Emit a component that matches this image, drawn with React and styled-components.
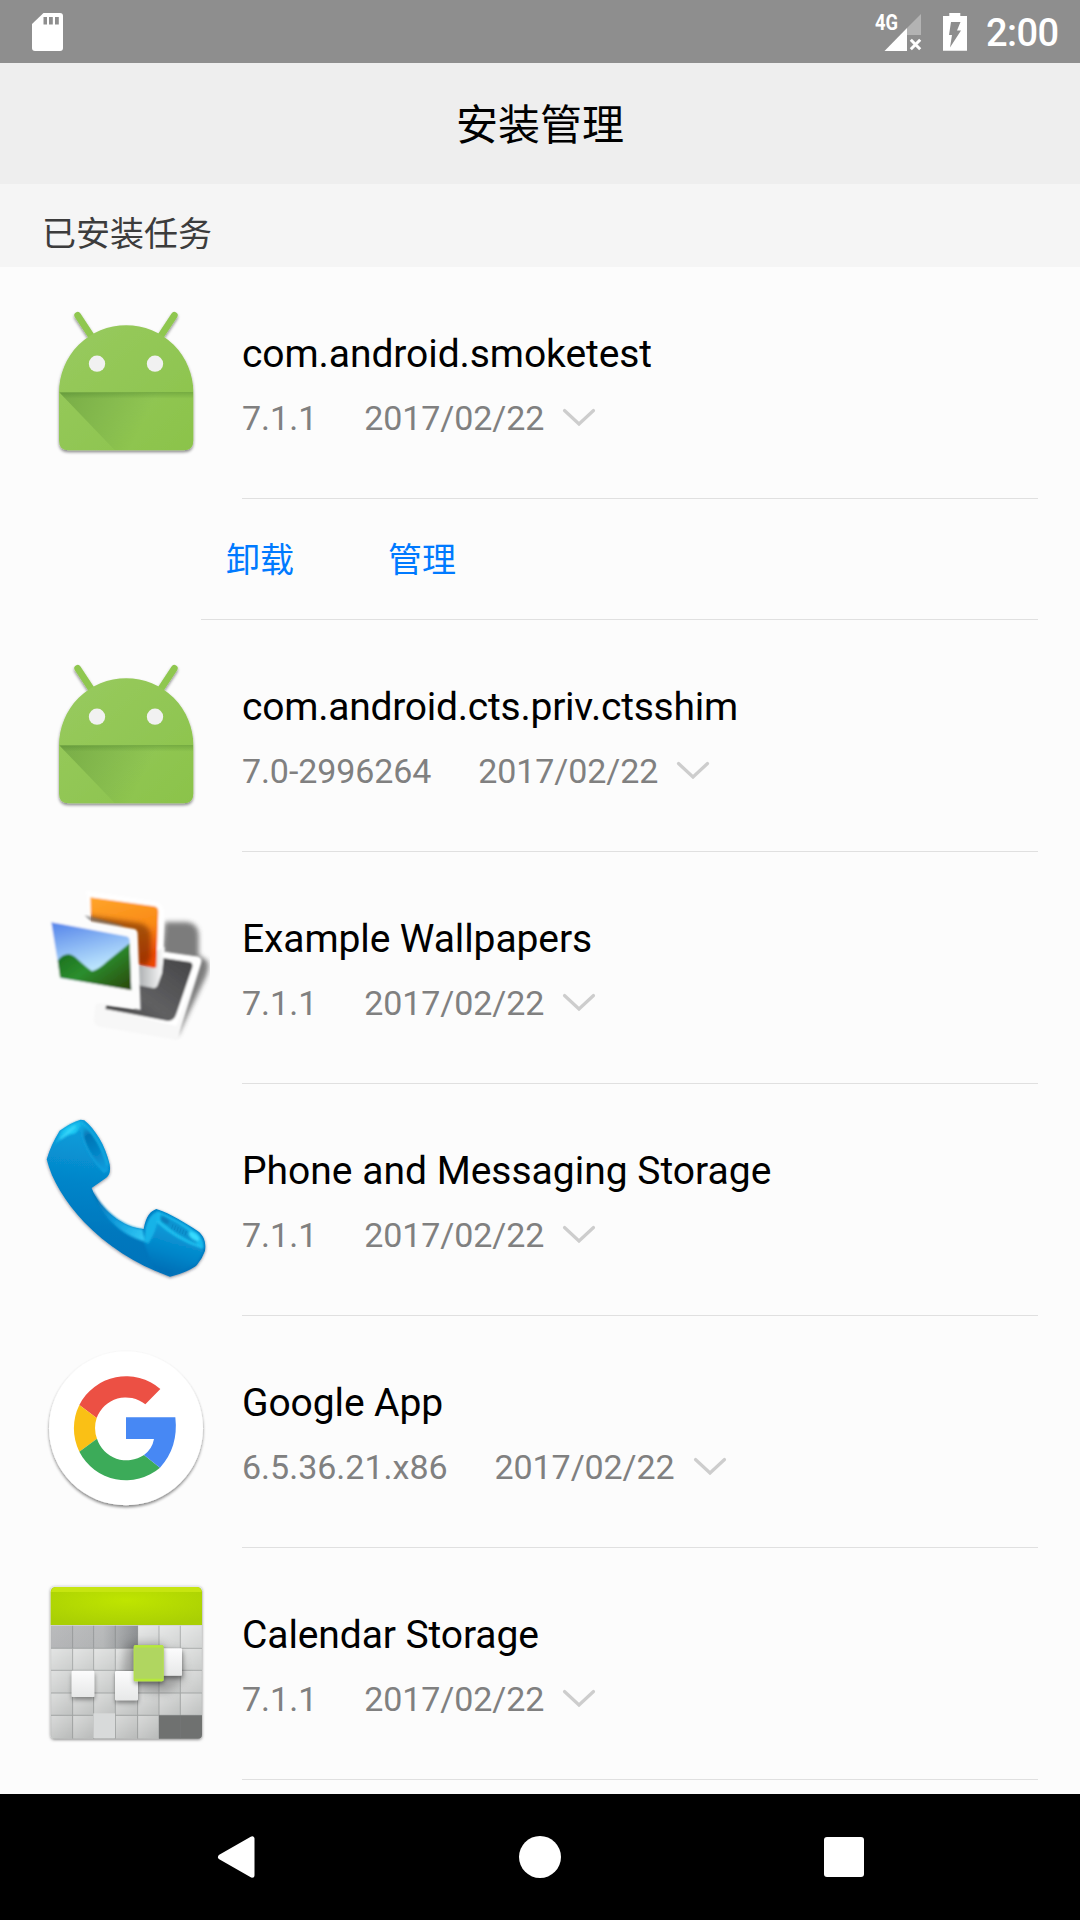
import React from "react";
import styled, { createGlobalStyle } from "styled-components";

const GlobalStyle = createGlobalStyle`
  body {
    margin: 0;
    background: #fcfcfc;
    font-family: Roboto, "Noto Sans CJK SC", sans-serif;
  }
`;

const Screen = styled.div`
  width: 1080px;
  height: 1920px;
  display: flex;
  flex-direction: column;
  overflow: hidden;
  background: #fcfcfc;
`;

const StatusBar = styled.div`
  height: 63px;
  flex: none;
  display: flex;
  align-items: center;
  justify-content: space-between;
  padding: 0 20px 0 31px;
  background: #8e8e8e;
  color: #fff;
`;

const StatusGroup = styled.div`
  display: flex;
  align-items: center;
`;

const Clock = styled.span`
  width: 74px;
  margin-left: 18px;
  font-size: 38px;
  line-height: 44px;
  font-weight: 500;
  letter-spacing: -0.6px;
  padding-top: 3px;
  white-space: nowrap;
`;

const StatusSvg = styled.svg`
  display: block;
  margin-left: ${(p) => p.$gap || 0}px;
`;

const Header = styled.header`
  height: 121px;
  flex: none;
  box-sizing: border-box;
  padding-top: 4px;
  display: flex;
  align-items: center;
  justify-content: center;
  background: #eeeeee;
`;

const Title = styled.h1`
  margin: 0;
  font-size: 42px;
  line-height: 60px;
  font-weight: 400;
  color: #000;
`;

const SectionHeader = styled.div`
  height: 83px;
  flex: none;
  box-sizing: border-box;
  padding: 25px 42px 0;
  background: #f5f5f5;
  color: #3c3c3c;
  font-size: 34px;
  line-height: 50px;
`;

const List = styled.main`
  flex: 1;
  min-height: 0;
  overflow: hidden;
`;

const Row = styled.div`
  height: 232px;
  display: flex;
  padding-right: 42px;
`;

const IconBox = styled.div`
  width: 160px;
  height: 160px;
  margin: 36px 36px 0 46px;
  flex: none;
`;

const AppSvg = styled.svg`
  display: block;
  overflow: visible;
`;

const Details = styled.div`
  flex: 1;
  box-sizing: border-box;
  padding-top: 64px;
  border-bottom: 1px solid #e0e0e0;
`;

const AppName = styled.div`
  font-size: 39px;
  line-height: 47px;
  letter-spacing: ${(p) => p.$tracking || 0}px;
  color: #000;
  white-space: nowrap;
`;

const Meta = styled.div`
  display: flex;
  align-items: center;
  margin-top: 20px;
  font-size: 34px;
  line-height: 40px;
  letter-spacing: -0.1px;
  color: #808080;
`;

const Version = styled.span`
  letter-spacing: ${(p) => p.$tracking || 0}px;
`;

const InstallDate = styled.span`
  margin: 0 18px 0 47px;
`;

const Actions = styled.div`
  height: 121px;
  box-sizing: border-box;
  margin: 0 42px 0 201px;
  padding: 2px 0 0 25px;
  display: flex;
  align-items: center;
  gap: 94px;
  border-bottom: 1px solid #e0e0e0;
`;

const ActionButton = styled.button`
  border: 0;
  padding: 0;
  background: none;
  font: inherit;
  font-size: 34px;
  line-height: 50px;
  color: #007aff;
`;

const NavBar = styled.nav`
  height: 126px;
  flex: none;
  display: flex;
  align-items: center;
  justify-content: space-between;
  padding: 0 216px;
  background: #000;
`;

const NavButton = styled.button`
  display: flex;
  border: 0;
  padding: 0;
  background: none;
`;

function SdCard() {
  return (
    <StatusSvg width="32" height="40" viewBox="0 0 32 40">
      <path fill="#fff" d="M12.500 1H29q3 0 3 3v32q0 3-3 3H4q-3 0-3-3V12z" />
      <path fill="#8e8e8e" d="M12.500 5h3.500v7.500h-3.500zM18 5h3.800v7.500H18zM24 5h3.800v7.500H24z" />
    </StatusSvg>
  );
}

const SignalLabel = styled.text`
  font-family: Roboto, sans-serif;
  font-weight: 700;
  font-size: 22px;
  fill: #fff;
`;

function Signal() {
  return (
    <StatusSvg width="52" height="56" viewBox="-4 -8 52 56">
      <SignalLabel x="1" y="17.600" textLength="23" lengthAdjust="spacingAndGlyphs">4G</SignalLabel>
      <path fill="#b3b3b3" d="M47 2v21H33v-7z" />
      <path fill="#fff" d="M33 16v23H10.500z" />
      <path stroke="#fff" strokeWidth="3" d="m36.800 27.800 9.400 9.400m0-9.400-9.400 9.400" />
    </StatusSvg>
  );
}

function Battery() {
  return (
    <StatusSvg $gap={20} width="26" height="40" viewBox="0 0 26 40">
      <path fill="#fff" d="M7.300 1h11v3H25v34.700H1V4h6.300z" />
      <path fill="#8e8e8e" d="M9 10h9.500l-3.500 8.500h4L8 35.500l2-12.500H7z" />
    </StatusSvg>
  );
}

function Chevron() {
  return (
    <svg width="34" height="20" viewBox="0 0 34 20">
      <path d="M2.500 2.500 17 16 31.500 2.500" fill="none" stroke="#cdcdcd" strokeWidth="3.200" strokeLinecap="round" />
    </svg>
  );
}

function AndroidIcon({ id }) {
  return (
    <AppSvg width="160" height="160" viewBox="48 39 480 480">
      <defs>
        <linearGradient id={`${id}-body`} x1="0" y1="0" x2="1" y2="1">
          <stop offset="0" stopColor="#98ca5f" />
          <stop offset="1" stopColor="#8bc34a" />
        </linearGradient>
        <linearGradient id={`${id}-fold`} gradientUnits="userSpaceOnUse" x1="100" y1="310" x2="330" y2="420">
          <stop offset="0" stopColor="#33691e" stopOpacity=".28" />
          <stop offset="1" stopColor="#33691e" stopOpacity="0" />
        </linearGradient>
        <linearGradient id={`${id}-seam`} x1="0" y1="0" x2="0" y2="1">
          <stop offset="0" stopColor="#33691e" stopOpacity=".28" />
          <stop offset="1" stopColor="#33691e" stopOpacity="0" />
        </linearGradient>
        <filter id={`${id}-shadow`} x="-10%" y="-10%" width="120%" height="125%">
          <feDropShadow dx="0" dy="6" stdDeviation="5" floodColor="#000" floodOpacity=".45" />
        </filter>
      </defs>
      <g filter={`url(#${id}-shadow)`}>
        <path d="m143 76 42 64M433 76l-42 64" stroke="#8fc750" strokeWidth="20" strokeLinecap="round" />
        <path fill={`url(#${id}-body)`} d="M87 307a201 201 0 0 1 403 0v145q0 29-29 29H116q-29 0-29-29z" />
      </g>
      <path fill={`url(#${id}-fold)`} d="M89 308h400v144q0 28-28 28H254z" />
      <path fill={`url(#${id}-seam)`} d="M88 306h401v20H105z" />
      <circle cx="201" cy="221" r="24.500" fill="#f1f1f1" />
      <circle cx="375" cy="221" r="24.500" fill="#f1f1f1" />
    </AppSvg>
  );
}

function WallpapersIcon() {
  return (
    <AppSvg width="160" height="160" viewBox="48 24 480 480">
      <defs>
        <linearGradient id="wp-sky" x1="0.200" y1="0" x2="0.500" y2="1">
          <stop offset="0" stopColor="#5b8aeb" />
          <stop offset=".7" stopColor="#b9e3fd" />
        </linearGradient>
        <linearGradient id="wp-hill" x1="0" y1="0.100" x2="1" y2="1">
          <stop offset="0" stopColor="#176b1b" />
          <stop offset=".45" stopColor="#2c8e2e" />
          <stop offset="1" stopColor="#2c4508" />
        </linearGradient>
        <linearGradient id="wp-orange" x1="0" y1="0" x2="0.300" y2="1">
          <stop offset="0" stopColor="#ffa52a" />
          <stop offset=".6" stopColor="#f98a16" />
          <stop offset="1" stopColor="#ee4a03" />
        </linearGradient>
        <linearGradient id="wp-grey" x1="1" y1="0" x2="0" y2="1">
          <stop offset="0" stopColor="#454547" />
          <stop offset=".6" stopColor="#606062" />
          <stop offset="1" stopColor="#444" />
        </linearGradient>
        <linearGradient id="wp-edge" x1="0" y1="0" x2="1" y2="0">
          <stop offset="0" stopColor="#a9acae" />
          <stop offset="1" stopColor="#fff" />
        </linearGradient>
        <filter id="wp-blur" x="-30%" y="-30%" width="160%" height="160%">
          <feGaussianBlur stdDeviation="8" />
        </filter>
        <filter id="wp-soft" x="-5%" y="-5%" width="110%" height="110%">
          <feGaussianBlur stdDeviation="3.500" />
        </filter>
        <clipPath id="wp-clip"><path d="M30 20h510v490H30z" /></clipPath>
        <clipPath id="wp-orange-clip"><path d="m181 52 192 27q12 3 12 16l-6 166q-5 4-12 2l-130-29-54-108z" /></clipPath>
      </defs>
      <g clipPath="url(#wp-clip)">
        <path filter="url(#wp-blur)" fill="#6e6e6e" opacity=".9" d="M405 126h65q34 4 36 38v62l26 16q8 20-5 50l-85 178-26-230-20-30z" />
        <g filter="url(#wp-soft)">
          <path fill="#f7f7f7" d="m408 218 94 12q16 6 10 24l-70 226-232-40q-22-4-18-26l4-38z" />
          <path fill="#fff" d="m408 216 98 14q10 4 8 14l-74 194-214-50 110-150z" />
          <path fill="url(#wp-grey)" d="m400 234 80 12q10 4 7 16l-48 140q-7 22-26 21l-187-36 3-12 84 10v-75l60 10z" />
          <path fill="#fff" d="m168 32 206 32q24 6 28 28l-2 118q-4 36-14 50l-54-5-148-115z" />
          <path fill="url(#wp-edge)" d="m322 245 82-45-8 80-14 38q-4 8-14 6l-46-9z" />
          <path fill="url(#wp-orange)" d="m181 52 192 27q12 3 12 16l-6 166q-5 4-12 2l-130-29-54-108z" />
        </g>
        <g clipPath="url(#wp-orange-clip)">
          <path filter="url(#wp-blur)" fill="#6e2a00" opacity=".6" d="m168 106 160 24q32 7 34 36v66l-12 26-110-20z" />
        </g>
        <path filter="url(#wp-soft)" fill="#777" opacity=".65" d="m164 106 30 7 90 25-28 5-70-13z" />
        <g filter="url(#wp-soft)">
          <path fill="#fcfcfc" d="m48 100 264 47q10 2 11 14l9 229-225-38q-25-7-29-32z" />
          <path fill="url(#wp-sky)" d="m64 127 224 42q10 2 11 12l5 148-213-34z" />
          <path fill="url(#wp-hill)" d="M83 242q28-36 60-4 25 23 43 36 24-9 44-29l69-55 5 141-214-38z" />
        </g>
      </g>
    </AppSvg>
  );
}

function PhoneIcon() {
  return (
    <AppSvg width="160" height="160" viewBox="48 60 480 480">
      <defs>
        <linearGradient id="ph-body" gradientUnits="userSpaceOnUse" x1="150" y1="110" x2="90" y2="560">
          <stop offset="0" stopColor="#0a9ad8" />
          <stop offset=".3" stopColor="#0485c9" />
          <stop offset=".6" stopColor="#0278be" />
          <stop offset="1" stopColor="#0670b8" />
        </linearGradient>
        <linearGradient id="ph-block" gradientUnits="userSpaceOnUse" x1="440" y1="395" x2="400" y2="530">
          <stop offset="0" stopColor="#0a98d7" />
          <stop offset=".5" stopColor="#0484c8" />
          <stop offset="1" stopColor="#0669b1" />
        </linearGradient>
        <linearGradient id="ph-top" x1="0" y1="1" x2="1" y2="0">
          <stop offset="0" stopColor="#0aa0dd" />
          <stop offset=".6" stopColor="#1fcdf5" />
          <stop offset="1" stopColor="#10b4e8" />
        </linearGradient>
        <linearGradient id="ph-ear" gradientUnits="userSpaceOnUse" x1="155" y1="70" x2="232" y2="210">
          <stop offset="0" stopColor="#14bdee" />
          <stop offset=".25" stopColor="#0674b4" />
          <stop offset=".6" stopColor="#0684c6" />
          <stop offset="1" stopColor="#0b9fdf" />
        </linearGradient>
        <linearGradient id="ph-inner" gradientUnits="userSpaceOnUse" x1="190" y1="270" x2="350" y2="420">
          <stop offset="0" stopColor="#0567a8" />
          <stop offset=".45" stopColor="#0d98d8" />
          <stop offset="1" stopColor="#35cdf8" />
        </linearGradient>
        <filter id="ph-shadow" x="-8%" y="-8%" width="116%" height="118%">
          <feDropShadow dx="0" dy="3" stdDeviation="4" floodColor="#223" floodOpacity=".5" />
        </filter>
        <filter id="ph-soft" x="-20%" y="-20%" width="140%" height="140%">
          <feGaussianBlur stdDeviation="3" />
        </filter>
      </defs>
      <path filter="url(#ph-shadow)" fill="url(#ph-body)" d="M152 59Q128 65 89 92 62 135 50 178c14 60 55 128 112 188 69 72 158 129 258 164 36-8 70-24 80-34q17-20 25-44c4-25-4-47-22-59-39-25-79-51-124-66-18 6-31 21-38 60-60-4-131-56-156-123l44-31q15-12 10-40c-13-58-44-106-76-132z" />
      <g filter="url(#ph-soft)">
        <path fill="url(#ph-top)" d="M150 63Q122 70 93 94L70 140q28-32 66-40 14-10 19-34z" />
        <path fill="none" stroke="#4fe0ff" strokeWidth="7" opacity=".6" d="m92 116 44-38" />
        <path fill="url(#ph-ear)" d="M154 64c38 30 69 85 81 132l-2 20-12 2c-30-32-58-76-68-122z" />
        <path fill="none" stroke="#14b4e8" strokeWidth="5" d="M155 66c36 32 64 82 78 130" />
        <path fill="none" stroke="#14a5e0" strokeWidth="5" d="M155 74c-3 50 32 106 68 142" />
        <path fill="url(#ph-inner)" d="M186 266c30 62 90 114 152 121l7 38c-75-21-137-80-159-159z" />
        <path fill="url(#ph-block)" d="M380 366l130 74 12 12-22 40-80 34-50-22-28-76q28-24 38-62z" />
        <path fill="#18b3e8" d="M346 384q9-38 34-50l3 28q-6 36-28 68l-12-4z" />
        <path fill="#19b9ec" d="M381 333c42 13 84 39 120 64 15 12 22 30 20 48-57-14-102-44-140-79z" />
        <path fill="#0b92cf" d="M392 344q55 24 90 54 18 20 18 34-62-26-102-66-10-12-6-22z" />
        <path fill="none" stroke="#25c6f3" strokeWidth="5" d="M381 364c36 34 88 62 138 80" />
        <ellipse cx="404" cy="361" rx="14" ry="9" transform="rotate(35 404 361)" fill="#0779b5" opacity=".8" />
        <ellipse cx="492" cy="409" rx="19" ry="9" transform="rotate(38 492 409)" fill="#37dcff" />
      </g>
      <path d="m429 373-4 13m12-9-4 13m12-9-4 13m12-9-4 13m12-9-4 13m12-9-4 13" stroke="#067bb5" strokeWidth="3" opacity=".45" />
    </AppSvg>
  );
}

function GoogleIcon() {
  return (
    <AppSvg width="160" height="160" viewBox="48 51 480 480">
      <defs>
        <filter id="go-shadow" x="-10%" y="-10%" width="120%" height="120%">
          <feDropShadow dx="0" dy="6" stdDeviation="5.500" floodColor="#000" floodOpacity=".48" />
        </filter>
      </defs>
      <circle cx="288" cy="280" r="231" fill="#fff" filter="url(#go-shadow)" />
      <path fill="#ec5044" d="M148 210A157 157 0 0 1 391 162l-45 46A93 93 0 0 0 200 249z" />
      <path fill="#fac015" d="M148 210a158 158 0 0 0 0 140l53-39a93 93 0 0 1-1-62z" />
      <path fill="#3cab59" d="M148 350a157 157 0 0 0 242 48l-48-38a93 93 0 0 1-141-49z" />
      <path fill="#4788f4" d="M288 247h148q10 90-46 151l-48-38q25-19 30-48h-84z" />
    </AppSvg>
  );
}

const CELL_X = [63, 128, 191, 256, 323, 387, 451, 516];
const CELL_Y = [167, 235, 301, 369, 436, 506];

function CalendarIcon() {
  return (
    <AppSvg width="160" height="160" viewBox="48 42 480 480">
      <defs>
        <radialGradient id="ca-top" cx=".5" cy=".35" r=".7">
          <stop offset="0" stopColor="#bfe500" />
          <stop offset="1" stopColor="#a9cf04" />
        </radialGradient>
        <linearGradient id="ca-grid" x1="0" y1="0" x2="0" y2="1">
          <stop offset="0" stopColor="#e0e2e2" />
          <stop offset=".5" stopColor="#cdcfce" />
          <stop offset="1" stopColor="#b9bbba" />
        </linearGradient>
        <linearGradient id="ca-past" x1="0" y1="0" x2="1" y2="0">
          <stop offset="0" stopColor="#b1b2b4" />
          <stop offset=".6" stopColor="#b2b4b5" />
          <stop offset="1" stopColor="#888b8e" />
        </linearGradient>
        <linearGradient id="ca-cell" x1="0" y1="0" x2="1" y2="1">
          <stop offset="0" stopColor="#fff" stopOpacity=".4" />
          <stop offset="1" stopColor="#fff" stopOpacity="0" />
        </linearGradient>
        <linearGradient id="ca-tile" x1="0" y1="0" x2="0" y2="1">
          <stop offset="0" stopColor="#fcfcfd" />
          <stop offset="1" stopColor="#e7e8e8" />
        </linearGradient>
        <filter id="ca-shadow" x="-10%" y="-10%" width="120%" height="120%">
          <feDropShadow dx="0" dy="2" stdDeviation="4" floodColor="#000" floodOpacity=".5" />
        </filter>
        <filter id="ca-drop" x="-40%" y="-40%" width="190%" height="190%">
          <feDropShadow dx="1" dy="8" stdDeviation="6" floodColor="#000" floodOpacity=".4" />
        </filter>
        <filter id="ca-blur" x="-40%" y="-40%" width="180%" height="180%">
          <feGaussianBlur stdDeviation="14" />
        </filter>
      </defs>
      <rect x="62" y="50" width="454" height="457" rx="12" fill="url(#ca-grid)" filter="url(#ca-shadow)" />
      <path fill="url(#ca-top)" d="M62 165V66q1-14 14-15h426q13 1 14 15v99z" />
      <path fill="#c6e510" d="M63 66q3-14 14-15h424q12 1 14 15z" />
      <path fill="url(#ca-past)" d="M63 167h260v68H63z" />
      <g fill="url(#ca-cell)">
        {CELL_Y.slice(0, -1).map((y, r) =>
          CELL_X.slice(0, -1).map((x, c) => (
            <rect key={`${r}-${c}`} x={x + 1} y={y + 1} width={CELL_X[c + 1] - x - 3} height={CELL_Y[r + 1] - y - 3} opacity={r === 0 && c < 4 ? 0.3 : 1} />
          ))
        )}
      </g>
      <path fill="#6f7170" d="M387 436h129v58q0 12-12 12H387z" />
      <g stroke="#777b7b" strokeWidth="3" opacity=".42">
        {CELL_X.slice(1, -1).map((x) => <path key={x} d={`M${x} 167v339`} />)}
        {CELL_Y.slice(1, -1).map((y) => <path key={y} d={`M63 ${y}h453`} />)}
      </g>
      <path filter="url(#ca-blur)" fill="#555" opacity=".4" d="M290 220h110v24h50l14 80-56 45-80-10-52-50z" />
      <rect x="190" y="430" width="65" height="74" fill="#d8dada" />
      <g fill="url(#ca-tile)" filter="url(#ca-drop)">
        <rect x="125" y="302" width="68" height="79" rx="3" />
        <rect x="255" y="303" width="69" height="88" rx="3" />
        <rect x="392" y="235" width="64" height="82" rx="3" />
      </g>
      <g filter="url(#ca-drop)">
        <rect x="311" y="225" width="90" height="109" rx="6" fill="#b0d660" />
      </g>
      <path d="M313 229h86M313 330h86" stroke="#b6e83b" strokeWidth="7" />
      <path d="M313 228v104M399 228v104" stroke="#b4df4e" strokeWidth="3" />
    </AppSvg>
  );
}

const APPS = [
  { name: "com.android.smoketest", tracking: -0.08, version: "7.1.1", icon: <AndroidIcon id="smoke" />, expanded: true },
  { name: "com.android.cts.priv.ctsshim", tracking: -0.24, version: "7.0-2996264", versionTracking: -0.1, icon: <AndroidIcon id="shim" /> },
  { name: "Example Wallpapers", tracking: -0.1, version: "7.1.1", icon: <WallpapersIcon /> },
  { name: "Phone and Messaging Storage", version: "7.1.1", icon: <PhoneIcon /> },
  { name: "Google App", tracking: -0.1, version: "6.5.36.21.x86", icon: <GoogleIcon /> },
  { name: "Calendar Storage", tracking: -0.1, version: "7.1.1", icon: <CalendarIcon /> },
];

function AppRow({ app }) {
  return (
    <>
      <Row>
        <IconBox>{app.icon}</IconBox>
        <Details>
          <AppName $tracking={app.tracking}>{app.name}</AppName>
          <Meta>
            <Version $tracking={app.versionTracking}>{app.version}</Version>
            <InstallDate>2017/02/22</InstallDate>
            <Chevron />
          </Meta>
        </Details>
      </Row>
      {app.expanded && (
        <Actions>
          <ActionButton>卸载</ActionButton>
          <ActionButton>管理</ActionButton>
        </Actions>
      )}
    </>
  );
}

export default function App() {
  return (
    <Screen lang="zh-CN">
      <GlobalStyle />
      <StatusBar>
        <SdCard />
        <StatusGroup>
          <Signal />
          <Battery />
          <Clock>2:00</Clock>
        </StatusGroup>
      </StatusBar>
      <Header>
        <Title>安装管理</Title>
      </Header>
      <SectionHeader>已安装任务</SectionHeader>
      <List>
        {APPS.map((app) => (
          <AppRow key={app.name} app={app} />
        ))}
      </List>
      <NavBar>
        <NavButton aria-label="Back">
          <svg width="40" height="44" viewBox="0 0 40 44">
            <path fill="#fff" stroke="#fff" strokeWidth="5" strokeLinejoin="round" d="M4.500 22 36 3.800v36.400z" />
          </svg>
        </NavButton>
        <NavButton aria-label="Home">
          <svg width="42" height="42" viewBox="0 0 42 42">
            <circle cx="21" cy="21" r="21" fill="#fff" />
          </svg>
        </NavButton>
        <NavButton aria-label="Recents">
          <svg width="40" height="40" viewBox="0 0 40 40">
            <rect width="40" height="40" rx="3" fill="#fff" />
          </svg>
        </NavButton>
      </NavBar>
    </Screen>
  );
}
